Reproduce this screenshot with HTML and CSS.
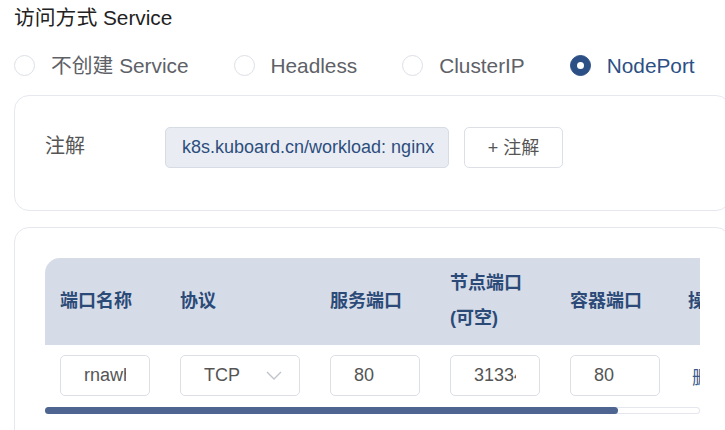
FILE: index.html
```html
<!DOCTYPE html>
<html lang="zh-CN">

<head>
    <meta charset="UTF-8">
    <meta name="viewport" content="width=device-width, initial-scale=1.0">
    <title>访问方式 Service</title>
    <link rel="stylesheet" href="styles.css">
</head>

<body>

    <div class="page">
        <h3 class="section-title">访问方式 Service</h3>

        <div class="radio-group">
            <label class="radio"><span class="radio-dot"></span><span class="radio-label">不创建 Service</span></label>
            <label class="radio"><span class="radio-dot"></span><span class="radio-label">Headless</span></label>
            <label class="radio"><span class="radio-dot"></span><span class="radio-label">ClusterIP</span></label>
            <label class="radio is-checked"><span class="radio-dot"></span><span class="radio-label">NodePort</span></label>
        </div>

        <!-- annotations -->
        <div class="card">
            <div class="form-item">
                <label class="form-label">注解</label>
                <div class="annotation-tag">k8s.kuboard.cn/workload: nginx</div>
                <button class="btn">+ 注解</button>
            </div>
        </div>

        <!-- ports -->
        <div class="card">
            <div class="table-wrap">
                <table class="port-table">
                    <colgroup>
                        <col class="col-name">
                        <col class="col-protocol">
                        <col class="col-port">
                        <col class="col-port">
                        <col class="col-port">
                        <col class="col-action">
                    </colgroup>
                    <thead>
                        <tr>
                            <th>端口名称</th>
                            <th>协议</th>
                            <th>服务端口</th>
                            <th>节点端口 (可空)</th>
                            <th>容器端口</th>
                            <th>操作</th>
                        </tr>
                    </thead>
                    <tbody>
                        <tr>
                            <td><input class="cell-input" type="text" value="rnawhz"></td>
                            <td>
                                <div class="cell-input cell-select">
                                    <span>TCP</span>
                                    <svg width="16" height="9" viewBox="0 0 16 9">
                                        <polyline points="1,1 8,8 15,1" fill="none" stroke="#c0c4cc" stroke-width="1.4"/>
                                    </svg>
                                </div>
                            </td>
                            <td><input class="cell-input" type="text" value="80"></td>
                            <td><input class="cell-input" type="text" value="31334"></td>
                            <td><input class="cell-input" type="text" value="80"></td>
                            <td class="cell-action">删除</td>
                        </tr>
                    </tbody>
                </table>
            </div>
            <div class="scrollbar">
                <div class="scrollbar-thumb"></div>
            </div>
        </div>
    </div>

</body>

</html>
```

FILE: styles.css
```css
body {
    margin: 0;
    font-family: "Liberation Sans", "Noto Sans CJK SC", sans-serif;
    background-color: #fff;
    overflow: hidden;
}

.page {
    width: 717px;
    margin-left: 14px;
}

.section-title {
    margin: 0;
    font-size: 20.8px;
    font-weight: normal;
    line-height: 36px;
    color: #222;
}

/* radio buttons */
.radio-group {
    display: flex;
    align-items: center;
    gap: 45px;
    height: 21px;
    margin-top: 19px;
}

.radio {
    display: flex;
    align-items: center;
    gap: 16px;
    font-size: 20.8px;
    line-height: 21px;
    color: #5e6167;
    white-space: nowrap;
}

.radio-dot {
    display: flex;
    align-items: center;
    justify-content: center;
    width: 21px;
    height: 21px;
    box-sizing: border-box;
    border: 1px solid #dcdfe6;
    border-radius: 50%;
}

.is-checked .radio-dot {
    background-color: #2c4f85;
    border-color: #2c4f85;
}

.is-checked .radio-dot::after {
    content: "";
    width: 7px;
    height: 7px;
    border-radius: 50%;
    background-color: #fff;
}

.is-checked .radio-label {
    color: #2c4f85;
}

/* cards */
.card {
    margin-top: 19px;
    padding: 30px;
    border: 1px solid #e6e8ef;
    border-radius: 15px;
}

.card + .card {
    margin-top: 16px;
}

.form-item {
    display: flex;
    align-items: center;
    height: 42px;
    margin-bottom: 12px;
}

.form-label {
    width: 120px;
    font-size: 20px;
    line-height: 24px;
    margin-top: -3px;
    color: #555;
}

.annotation-tag {
    width: 284px;
    height: 41px;
    box-sizing: border-box;
    padding: 0 16px;
    line-height: 39px;
    font-size: 18px;
    color: #2d4e7e;
    background-color: #e9edf3;
    border: 1px solid #d6dbe4;
    border-radius: 5px;
    white-space: nowrap;
}

.btn {
    margin-left: 15px;
    width: 99px;
    height: 41px;
    padding: 0 0 3px;
    font-family: inherit;
    font-size: 18px;
    color: #555;
    background-color: #fff;
    border: 1px solid #dcdfe6;
    border-radius: 5px;
}

/* ports table */
.table-wrap {
    width: 655px;
    overflow: hidden;
}

.port-table {
    width: 749px;
    table-layout: fixed;
    border-collapse: separate;
    border-spacing: 0;
}

.col-name {
    width: 120px;
}

.col-protocol {
    width: 150px;
}

.col-port {
    width: 120px;
}

.col-action {
    width: 119px;
}

.port-table th {
    padding: 8px 15px 9px;
    line-height: 35px;
    font-size: 18px;
    font-weight: bold;
    text-align: left;
    color: #2b4a78;
    background-color: #d6dce7;
    vertical-align: middle;
}

.port-table th:first-child {
    border-top-left-radius: 15px;
}

.port-table th:last-child {
    padding-left: 13px;
    border-top-right-radius: 15px;
}

.port-table td {
    padding: 10px 15px;
    vertical-align: middle;
}

.cell-input {
    display: block;
    width: 100%;
    height: 41px;
    box-sizing: border-box;
    padding: 0 23px;
    font-family: inherit;
    font-size: 18px;
    color: #555;
    background-color: #fff;
    border: 1px solid #dcdfe6;
    border-radius: 5px;
    outline: none;
}

.cell-select {
    display: flex;
    align-items: center;
    justify-content: space-between;
    padding-right: 17px;
}

.port-table td.cell-action {
    padding-left: 17px;
    font-size: 18px;
    color: #3b5a8a;
    white-space: nowrap;
}

/* horizontal scrollbar under the table */
.scrollbar {
    width: 655px;
    height: 7px;
    margin-top: 1px;
    border-radius: 4px;
    box-shadow: inset 0 0 0 1px #e4e7ed;
}

.scrollbar-thumb {
    width: 573px;
    height: 7px;
    border-radius: 4px;
    background-color: #4e6592;
}
```
